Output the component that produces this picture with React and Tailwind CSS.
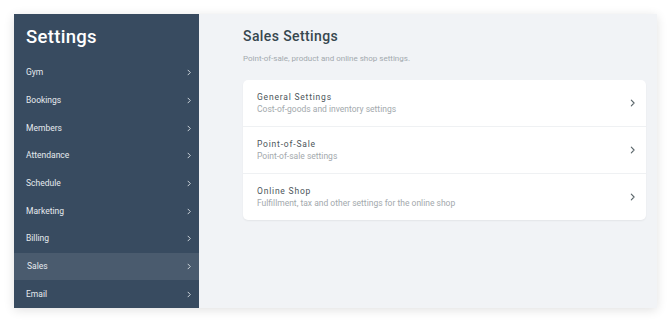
import { Fragment } from 'react';

const navItems = ['Gym', 'Bookings', 'Members', 'Attendance', 'Schedule', 'Marketing', 'Billing', 'Sales', 'Email'];

const sections = [
  { title: 'General Settings', desc: 'Cost-of-goods and inventory settings' },
  { title: 'Point-of-Sale', desc: 'Point-of-sale settings' },
  { title: 'Online Shop', desc: 'Fulfillment, tax and other settings for the online shop' },
];

function Chevron({ className }) {
  return (
    <svg viewBox="0 0 6 10" className={className} fill="none" stroke="currentColor" strokeWidth="1.4" strokeLinecap="round" strokeLinejoin="round">
      <path d="M1.5 1.5 5 5l-3.5 3.5" />
    </svg>
  );
}

export default function App() {
  return (
    <div className="h-[324px] w-[670px] bg-white pl-[14px] pt-[14px] font-['Roboto',sans-serif]">
      <div className="flex h-[294px] w-[643px] overflow-hidden shadow-[0_2px_10px_rgba(0,0,0,0.12)]">
        <aside className="flex w-[185px] shrink-0 flex-col bg-[#384b60]">
          <div className="flex h-[45px] items-center pl-[12px] pt-[2px]">
            <h1 className="text-[18.5px] font-medium tracking-[0.3px] text-white">Settings</h1>
          </div>
          {navItems.map((item) => (
            <div
              key={item}
              className={
                'flex h-[27.75px] items-center justify-between pr-[8px] text-[8.5px] text-[#e6eaee] ' +
                (item === 'Sales' ? 'bg-[#4a5b6e] pl-[13px]' : 'pl-[12px]')
              }
            >
              <span>{item}</span>
              <Chevron className="h-[7px] w-[4px] text-[#d5dbe1]" />
            </div>
          ))}
        </aside>

        <main className="flex-1 bg-[#f1f3f6] pl-[44px] pr-[11px]">
          <h2 className="pt-[13px] text-[14px] font-medium leading-[18px] tracking-[0.4px] text-[#37474f]">Sales Settings</h2>
          <p className="mt-[9px] text-[8px] leading-[10px] text-[#a2a9ae]">Point-of-sale, product and online shop settings.</p>
          <div className="mt-[16px] rounded-[5px] bg-white shadow-[0_1px_2px_rgba(0,0,0,0.06)]">
            {sections.map((s, i) => (
              <Fragment key={s.title}>
                {i > 0 && <div className="h-px bg-[#eff1f3]" />}
                <div className="flex h-[46px] items-center justify-between pl-[14px] pr-[11px]">
                  <div className="flex flex-col">
                    <span className="text-[8.5px] leading-[11px] tracking-[0.8px] text-[#4c555a]">{s.title}</span>
                    <span className="text-[8.5px] leading-[12px] text-[#a3a9ad]">{s.desc}</span>
                  </div>
                  <Chevron className="h-[8px] w-[5px] text-[#5b666b]" />
                </div>
              </Fragment>
            ))}
          </div>
        </main>
      </div>
    </div>
  );
}
